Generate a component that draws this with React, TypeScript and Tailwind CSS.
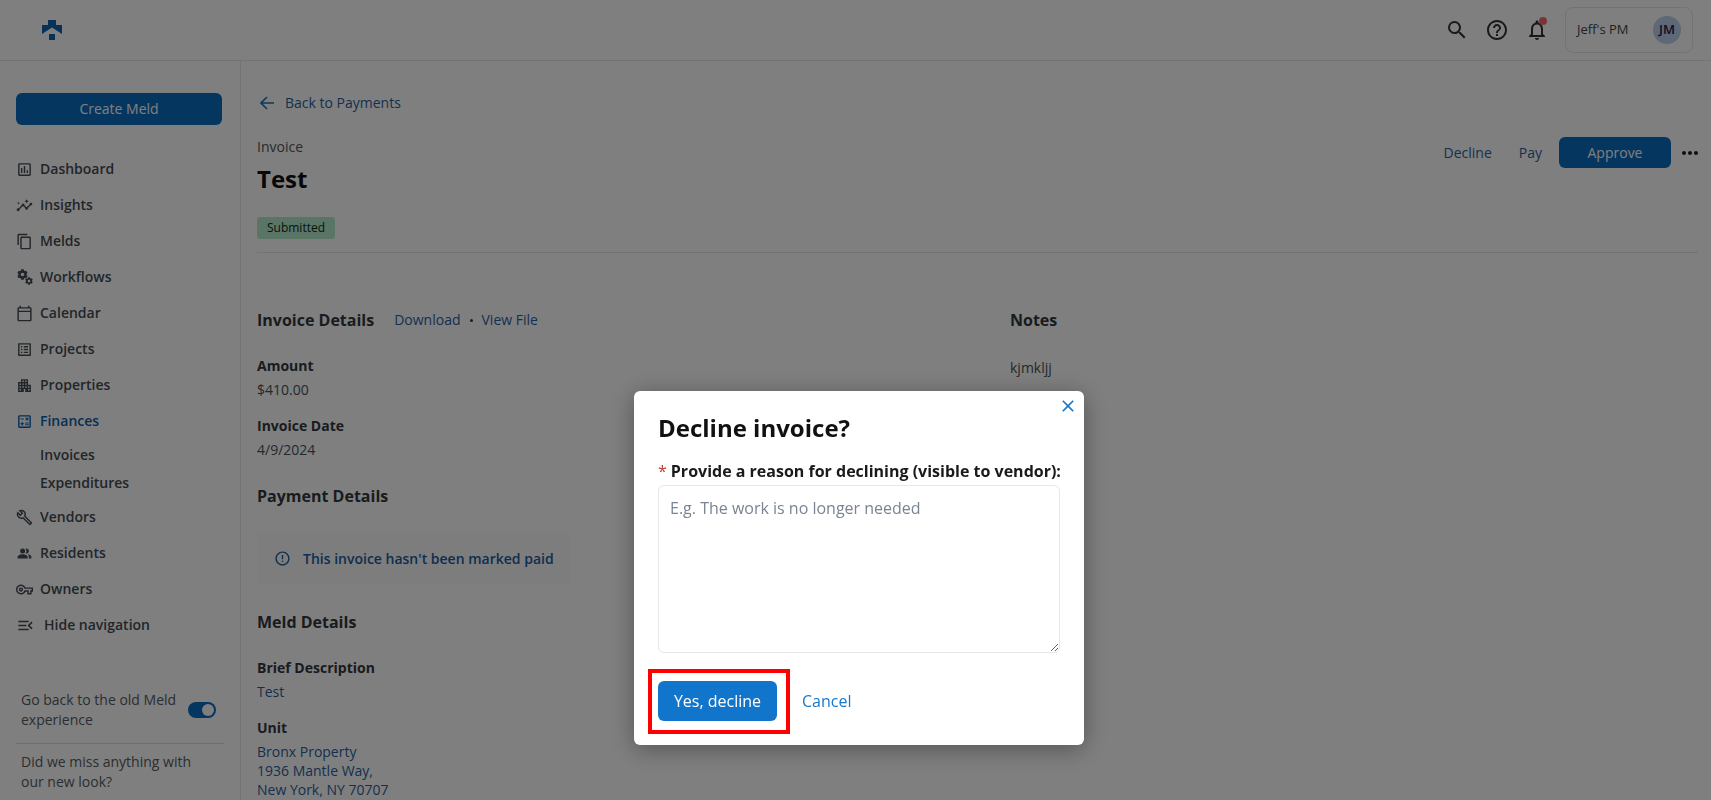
import type { ReactNode } from "react";
import { FaCog } from "react-icons/fa";
import {
  MdClose,
  MdContentCopy,
  MdErrorOutline,
  MdHelpOutline,
  MdMoreHoriz,
  MdOutlineApartment,
  MdOutlineAssessment,
  MdOutlineBuild,
  MdOutlineCalculate,
  MdOutlineCalendarToday,
  MdOutlineInsights,
  MdOutlineListAlt,
  MdOutlineMenuOpen,
  MdOutlineNotifications,
  MdOutlineVpnKey,
  MdPeopleAlt,
  MdSearch,
} from "react-icons/md";

const NavItem = ({ icon, label, active }: { icon: ReactNode; label: string; active?: boolean }) => (
  <div className={`flex h-9 items-center ${active ? "text-[#0e5ea8]" : "text-[#444b52]"}`}>
    <span className="flex w-[24px] justify-start text-[17px]">{icon}</span>
    <span className="text-sm font-semibold">{label}</span>
  </div>
);

const Field = ({ label, children }: { label: string; children: ReactNode }) => (
  <div className="mb-[16px]">
    <div className="text-sm leading-[20px] font-bold text-[#33383d]">{label}</div>
    <div className="mt-[4px] text-sm leading-[20px] text-[#4a5158]">{children}</div>
  </div>
);

// two gears, the small one below and to the right
const GearsIcon = () => (
  <span className="relative block h-[17px] w-[17px]">
    <FaCog className="absolute top-0 left-[1px] text-[11px]" />
    <FaCog className="absolute top-[8px] left-[9px] text-[8px]" />
  </span>
);

const Sidebar = () => (
  <aside className="flex h-[739px] w-[241px] shrink-0 flex-col border-r border-[#e5e7eb] px-4 pt-[32px]">
    <button className="h-8 w-[206px] rounded-[6px] bg-[#0a6cc0] text-sm text-white">Create Meld</button>
    <nav className="mt-[26px]">
      <NavItem icon={<MdOutlineAssessment />} label="Dashboard" />
      <NavItem icon={<MdOutlineInsights />} label="Insights" />
      <NavItem icon={<MdContentCopy />} label="Melds" />
      <NavItem icon={<GearsIcon />} label="Workflows" />
      <NavItem icon={<MdOutlineCalendarToday />} label="Calendar" />
      <NavItem icon={<MdOutlineListAlt />} label="Projects" />
      <NavItem icon={<MdOutlineApartment />} label="Properties" />
      <NavItem icon={<MdOutlineCalculate />} label="Finances" active />
      <div className="flex flex-col pt-[2px] pb-[2px] pl-[24px] text-sm leading-[28px] font-semibold text-[#444b52]">
        <span>Invoices</span>
        <span>Expenditures</span>
      </div>
      <NavItem icon={<MdOutlineBuild />} label="Vendors" />
      <NavItem icon={<MdPeopleAlt className="ml-[1px] text-[15px]" />} label="Residents" />
      <NavItem icon={<MdOutlineVpnKey />} label="Owners" />
      <div className="flex h-9 items-center text-[#444b52]">
        <span className="w-[28px] text-[19px]">
          <MdOutlineMenuOpen />
        </span>
        <span className="text-sm font-semibold">Hide navigation</span>
      </div>
    </nav>
    <div className="mt-[47px] flex items-center justify-between pr-[8px] pl-[5px] text-sm leading-[20px] text-[#555c63]">
      <span className="w-[165px]">Go back to the old Meld experience</span>
      <span className="flex h-4 w-7 items-center justify-end rounded-full bg-[#0a6cc0] pr-[2px]">
        <span className="h-3 w-3 rounded-full bg-white" />
      </span>
    </div>
    <div className="mt-[13px] border-t border-[#d9dce0] px-[5px] pt-[8px] text-sm leading-[20px] text-[#555c63]">
      <span className="block w-[175px]">Did we miss anything with our new look?</span>
    </div>
  </aside>
);

const Content = () => (
  <main className="min-w-0 flex-1 pt-[32px] pr-[13px] pl-4">
    <div className="flex h-5 items-center gap-[11px] pl-[3px] text-sm text-[#2a5f9e]">
      <svg width="14" height="14" viewBox="0 0 14 14" fill="none" stroke="#1a70c0" strokeWidth="1.6">
        <path d="M14 7H1M7 1 1 7l6 6" />
      </svg>
      Back to Payments
    </div>
    <div className="mt-[24px] flex items-start justify-between border-b border-[#e5e7eb] pb-[13px]">
      <div>
        <div className="text-sm leading-[20px] text-[#50565c]">Invoice</div>
        <div className="mt-[7px] text-[24px] leading-[30px] font-bold text-[#111]">Test</div>
        <span className="mt-[23px] flex h-[22px] w-[78px] items-center justify-center rounded-[3px] bg-[#b5e8cb] text-xs font-medium text-[#0f2c19]">
          Submitted
        </span>
      </div>
      <div className="-mr-[4px] flex items-center text-sm text-[#2a5f9e]">
        <span>Decline</span>
        <span className="ml-[27px]">Pay</span>
        <button className="ml-[17px] h-[31px] w-[112px] rounded-[6px] bg-[#0a6cc0] text-sm text-white">Approve</button>
        <span className="ml-[7px] text-[24px] text-[#222]">
          <MdMoreHoriz />
        </span>
      </div>
    </div>
    <div className="mt-[55px] flex">
      <div className="w-[753px]">
        <div className="flex items-center">
          <h2 className="text-base leading-[24px] font-bold text-[#33383d]">Invoice Details</h2>
          <div className="ml-[20px] flex items-center gap-[9px] text-sm text-[#2a5f9e]">
            <span>Download</span>
            <span className="h-[3px] w-[3px] rounded-full bg-[#33383d]" />
            <span>View File</span>
          </div>
        </div>
        <div className="mt-[24px]">
          <Field label="Amount">$410.00</Field>
          <Field label="Invoice Date">4/9/2024</Field>
        </div>
        <h2 className="mt-[24px] text-base leading-[24px] font-bold text-[#33383d]">Payment Details</h2>
        <div className="mt-[24px] flex h-[53px] w-[313px] items-center gap-[12px] rounded-[3px] bg-[#fafafa] px-[17px] text-sm font-semibold whitespace-nowrap text-[#1c5c9e]">
          <MdErrorOutline className="shrink-0 text-[17px]" />
          This invoice hasn't been marked paid
        </div>
        <h2 className="mt-[25px] text-base leading-[24px] font-bold text-[#33383d]">Meld Details</h2>
        <div className="mt-[24px]">
          <Field label="Brief Description">
            <span className="text-[#2a5f9e]">Test</span>
          </Field>
          <Field label="Unit">
            <span className="block leading-[19px] text-[#2a5f9e]">
              Bronx Property
              <br />
              1936 Mantle Way,
              <br />
              New York, NY 70707
            </span>
          </Field>
        </div>
      </div>
      <div>
        <h2 className="text-base leading-[24px] font-bold text-[#33383d]">Notes</h2>
        <div className="mt-[26px] text-sm leading-[20px] text-[#4a5158]">kjmkljj</div>
      </div>
    </div>
  </main>
);

const Header = () => (
  <header className="flex h-[61px] items-center justify-between border-b border-[#e5e7eb] pr-[18px] pl-[42px]">
    <svg width="20" height="20" viewBox="0 0 20 20" fill="#0e64ae" className="-mt-[1px]">
      <path d="M6 0h8v5h6v9L10 7.5 0 14V5h6zM7 14h6v6H7z" />
    </svg>
    <div className="flex items-center text-[#333]">
      <MdSearch className="text-[24px]" />
      <MdHelpOutline className="ml-[16px] text-[24px]" />
      <div className="relative ml-[16px]">
        <MdOutlineNotifications className="text-[24px]" />
        <span className="absolute top-[-1px] right-[2px] h-2 w-2 rounded-full bg-[#f26b6b]" />
      </div>
      <div className="ml-[16px] flex h-[46px] w-[128px] items-center justify-between rounded-[8px] border border-[#e5e7eb] pr-[11px] pl-[11px]">
        <span className="text-[13px] text-[#444]">Jeff's PM</span>
        <span className="flex h-7 w-7 items-center justify-center rounded-full bg-[#bcd0ee] text-[13px] font-semibold text-[#1b1b4b]">
          JM
        </span>
      </div>
    </div>
  </header>
);

const DeclineModal = () => (
  <div className="fixed inset-0 bg-black/50">
    <div className="absolute top-[391px] left-[634px] h-[354px] w-[450px] rounded-[6px] bg-white px-6 pt-[20px] shadow-[0_4px_24px_rgba(0,0,0,0.35)]">
      <button className="absolute top-[5px] right-[6px] text-[20px] text-[#1a78cc]">
        <MdClose />
      </button>
      <h2 className="text-[24px] leading-[34px] font-bold text-[#111]">Decline invoice?</h2>
      <label className="mt-[14px] block text-base leading-[24px] font-bold whitespace-nowrap text-[#1a1a1a]">
        <span className="mr-[4px] font-normal text-[#c0392b]">*</span>
        Provide a reason for declining (visible to vendor):
      </label>
      <textarea
        readOnly
        placeholder="E.g. The work is no longer needed"
        className="mt-[2px] block h-[168px] w-[402px] rounded-[6px] border border-[#e5e7eb] px-[11px] py-[10px] text-base leading-[24px] placeholder:text-[#7b8494]"
      />
      <div className="relative mt-[28px] flex h-10 items-center">
        <button className="h-10 w-[119px] rounded-[6px] bg-[#1175cc] text-base font-medium text-white">Yes, decline</button>
        <span className="ml-[25px] text-base text-[#1a78cc]">Cancel</span>
        <span className="absolute top-[-12px] left-[-10px] h-[65px] w-[142px] border-4 border-[#ff0000]" />
      </div>
    </div>
  </div>
);

export default function App() {
  return (
    <div className="h-[800px] overflow-hidden bg-white font-['Open_Sans',sans-serif]">
      <Header />
      <div className="flex">
        <Sidebar />
        <Content />
      </div>
      <DeclineModal />
    </div>
  );
}
